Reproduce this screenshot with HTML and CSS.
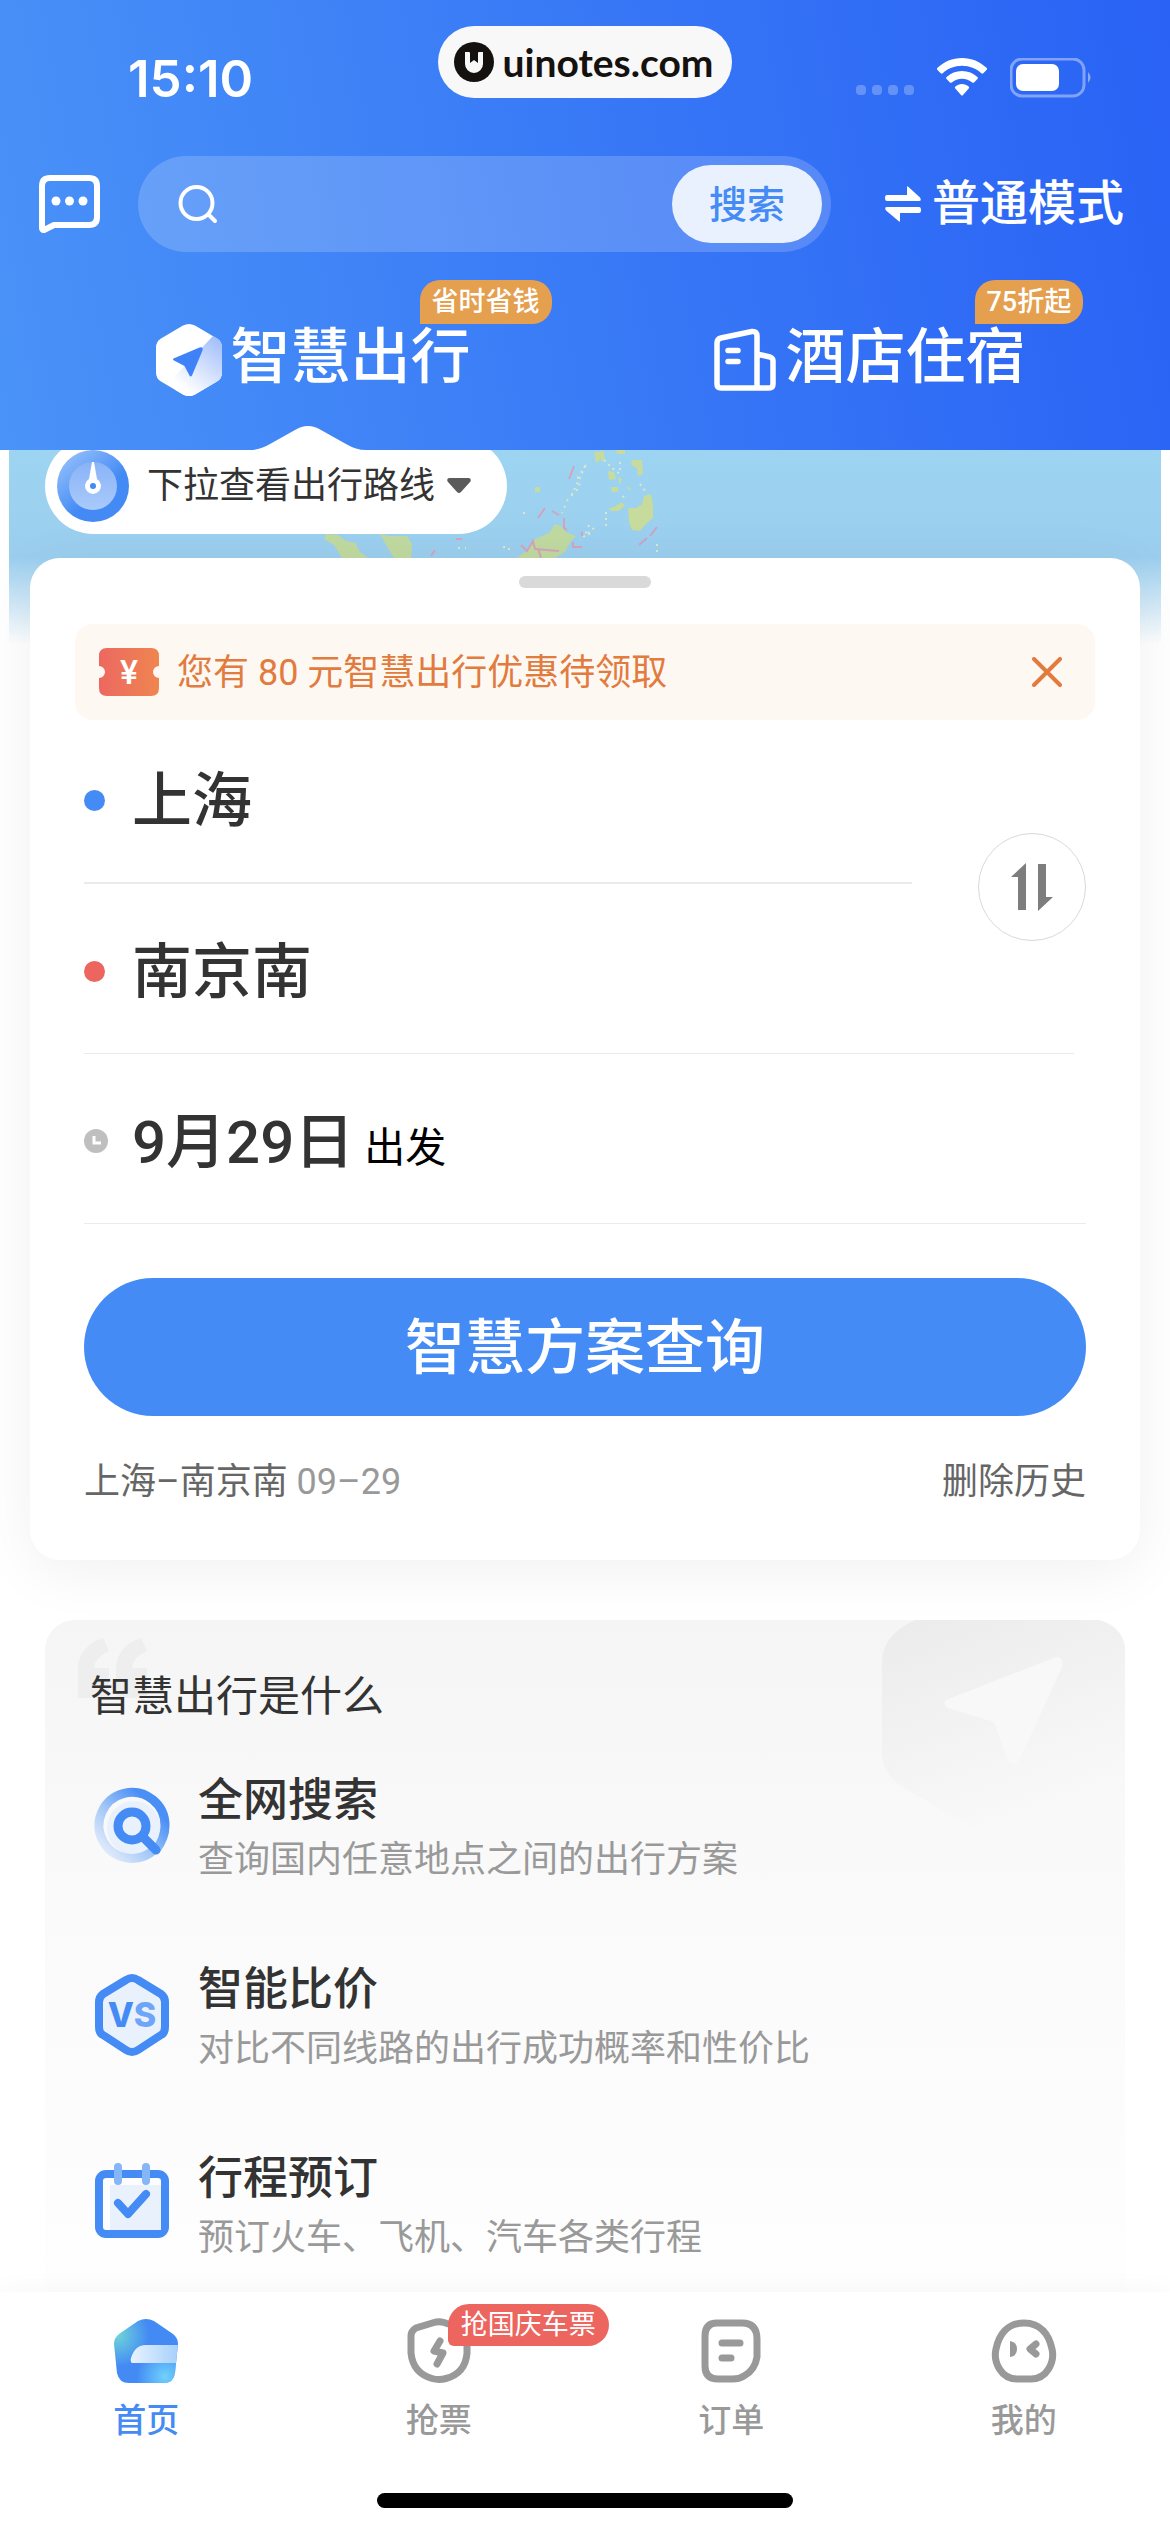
FILE: index.html
```html
<!DOCTYPE html>
<html lang="zh-CN">
<head>
  <meta charset="UTF-8">
  <meta name="viewport" content="width=device-width, initial-scale=1">
  <title>智慧出行</title>
  <link rel="stylesheet" href="styles.css">
</head>
<body>
  <header class="header">
    <div class="status-bar">
      <span class="time">15:10</span>
      <div class="site-pill">
        <svg width="40" height="40" viewBox="0 0 40 40" aria-hidden="true">
          <circle cx="20" cy="20" r="20" fill="#15110f"/>
          <path d="M11 10h4q1 0 1 1v10l4-3 4 3V11q0-1 1-1h4v12a9 9 0 0 1-18 0z" fill="#f8f8f8"/>
          <path d="M16.500 8h7v11l-3.500-3-3.500 3z" fill="#15110f"/>
        </svg>
        <span>uinotes.com</span>
      </div>
      <div class="status-icons">
        <svg width="58" height="38" viewBox="0 0 58 38" fill="#fff" opacity=".25" aria-hidden="true">
          <rect y="27" width="10" height="10" rx="4"/><rect x="16" y="27" width="10" height="10" rx="4"/>
          <rect x="32" y="27" width="10" height="10" rx="4"/><rect x="48" y="27" width="10" height="10" rx="4"/>
        </svg>
        <svg width="52" height="38" viewBox="0 0 52 38" fill="#fff" aria-hidden="true">
          <path d="M26 0c9.500 0 18 3.700 24.500 9.800.7.700.7 1.500 0 2.200l-3.200 3.200c-.6.600-1.400.6-2 0C40.200 10.500 33.500 7.700 26 7.700S11.800 10.500 6.700 15.200c-.6.600-1.400.6-2 0L1.500 12c-.7-.7-.7-1.500 0-2.200C8 3.700 16.500 0 26 0z"/>
          <path d="M26 13c6 0 11.300 2.300 15.400 6 .7.600.7 1.500 0 2.100l-3.300 3.300c-.6.600-1.300.6-1.900.1-2.800-2.400-6.300-3.800-10.200-3.800s-7.400 1.400-10.200 3.800c-.6.500-1.300.5-1.900-.1l-3.300-3.300c-.7-.6-.7-1.500 0-2.100C14.700 15.300 20 13 26 13z"/>
          <path d="M26 26c2.500 0 4.800.9 6.600 2.400.7.600.7 1.400.1 2L27 36.900c-.6.700-1.400.7-2 0l-5.700-6.500c-.6-.6-.6-1.400.1-2C21.200 26.900 23.500 26 26 26z"/>
        </svg>
        <svg width="82" height="40" viewBox="0 0 82 40" aria-hidden="true">
          <rect x="1" y="1" width="73" height="37" rx="11" fill="none" stroke="#fff" stroke-opacity=".4" stroke-width="3"/>
          <rect x="6" y="6" width="43" height="27" rx="7" fill="#fff"/>
          <path d="M78 14q5 5.500 0 11z" fill="#fff" fill-opacity=".45"/>
        </svg>
      </div>
    </div>

    <div class="search-row">
      <button class="icon-button" type="button" aria-label="消息">
        <svg width="61" height="60" viewBox="0 0 61 60" aria-hidden="true">
          <path d="M11 4h39q8 0 8 8v31q0 8-8 8H15L5 56q-2 .5-2-2V12q0-8 8-8z" fill="none" stroke="#fff" stroke-width="6" stroke-linejoin="round"/>
          <circle cx="17" cy="27" r="4.500" fill="#fff"/><circle cx="30.500" cy="27" r="4.500" fill="#fff"/><circle cx="44" cy="27" r="4.500" fill="#fff"/>
        </svg>
      </button>
      <form class="search-box">
        <svg width="40" height="40" viewBox="0 0 40 40" fill="none" stroke="#fff" stroke-width="4" stroke-linecap="round" aria-hidden="true">
          <circle cx="18.500" cy="19" r="16"/><path d="M31 31l6 6"/>
        </svg>
        <input class="search-input" type="text" aria-label="搜索内容">
        <button class="search-button" type="button">搜索</button>
      </form>
      <button class="mode-button" type="button">
        <svg width="36" height="36" viewBox="0 0 36 36" fill="#fff" aria-hidden="true">
          <path d="M2 9h20V1.500q0-2 1.500-.5L35 11.500q2 3.500-1 3.500H2q-2 0-2-3t2-3z"/>
          <path d="M34 21q2 0 2 3t-2 3H15v7.500q0 2-1.500.5L1 24.500Q-1 21 2 21z"/>
        </svg>
        <span>普通模式</span>
      </button>
    </div>

    <nav class="tabs">
      <a class="tab" href="#travel">
        <svg width="68" height="72" viewBox="0 0 68 72" aria-hidden="true">
          <defs>
            <linearGradient id="hexShade" x1="1" y1="0" x2=".4" y2="1">
              <stop offset="0" stop-color="#9ab9fb"/><stop offset="1" stop-color="#fff"/>
            </linearGradient>
            <clipPath id="hexClip"><path d="M28 1.500q6-3 12 0l22 13q5 3 5 9v25q0 6-5 9l-22 13q-6 3-12 0l-22-13q-5-3-5-9v-25q0-6 5-9z"/></clipPath>
          </defs>
          <g clip-path="url(#hexClip)">
            <rect width="68" height="72" fill="#fff"/>
            <path d="M58 12L20 52v20h48V12z" fill="url(#hexShade)"/>
          </g>
          <path d="M18.500 34.500l26-11q4-1 3 3l-10.500 25q-1.500 2-2.500 0l-5-9.500-10.500-5.500q-2-1-.5-2z" fill="#3f82f7"/>
        </svg>
        <span class="tab-label">智慧出行<span class="tab-badge">省时省钱</span></span>
      </a>
      <a class="tab" href="#hotel">
        <svg width="64" height="64" viewBox="0 0 64 64" fill="none" stroke="#fff" stroke-width="5.500" stroke-linecap="round" stroke-linejoin="round" aria-hidden="true">
          <path d="M43 60V8q0-5-5-4.500L7 10q-4 1-4 5v41q0 4 4 4h48q4 0 4-4V33q0-3-3-4l-13-3"/>
          <path d="M14 22.500h10M14 33.500h10"/>
        </svg>
        <span class="tab-label">酒店住宿<span class="tab-badge">75折起</span></span>
      </a>
      <svg class="tab-notch" width="116" height="24" viewBox="0 0 116 24" aria-hidden="true">
        <path d="M0 24q10 0 20-6L45 4q13-8 26 0l25 14q10 6 20 6z" fill="#fff"/>
      </svg>
    </nav>
  </header>

  <main class="main" id="travel">
    <section class="map">
      <svg class="map-land" width="600" height="108" viewBox="0 0 600 108" aria-hidden="true">
        <g fill="#bfd9a0">
          <path d="M317 84l12 1 8 6 10 2 3 8 9 7h-26l-8-13-10-6z"/>
          <path d="M371 84l9 2 18 0 5 8-1 14h-17l-5-8z"/>
          <path d="M508 108l12-9 6-10 14-6 6-9 6 2 5 6 10 4-6 6-5 10-10 6z"/>
        </g>
        <path d="M590 2l4-2 2 8-3 5zM526 37h5v5h-5z" fill="#c6db9c"/>
        <path d="M565 16l-5 13M536 58l-7 10M543 61l7 4M555 68v10l3 2M512 95l6 6 6-10 2 8 24 2M529 98l3 10M447 89h6M426 100l-4 6M573 82v4M564 92v5h9" fill="none" stroke="#d4a3bb" stroke-width="2"/>
        <path d="M577 15l-8 12 2 10-12 12-6 14M580 75l-4 10 8-2M449 98h8M494 97h6v5M514 63h6" fill="none" stroke="#dce8c4" stroke-width="2" stroke-dasharray="2 5"/>
      </svg>
      <!-- Philippines -->
      <svg class="map-islands" width="90" height="108" viewBox="0 0 90 108" aria-hidden="true">
        <g fill="#c6db9c">
          <path d="M24 2l6 0 1 7-5 4zM46 0h9v4h-8zM62 10l10 0 1 14-5 2-1-8-6-3zM38 21l6 1 2 7-7 1zM41 37h7v5h-6zM48 27l4 2-2 6zM57 37l4 1-2 3z"/>
          <path d="M83 54l-2-10-7 2-2 8-6 4-8 0 1 14 3 8 8 1 7-8 6-5zM38 59l8-3 5-4 4 3-6 6-7 0z"/>
        </g>
        <path d="M15 16l-6 14-8 16M34 10l8 8 8 6M50 12v10M54 46l-4 4M70 34l6 8M36 62v14M24 78l-14 12M87 94v10" fill="none" stroke="#dbe8c8" stroke-width="2" stroke-dasharray="2 4"/>
        <path d="M87 77l-7 9M77 88l-8 7" fill="none" stroke="#cfa2c2" stroke-width="2"/>
      </svg>
      <button class="map-pill" type="button">
        <svg width="72" height="72" viewBox="0 0 72 72" aria-hidden="true">
          <defs>
            <linearGradient id="ring" x1=".1" y1="0" x2=".6" y2=".6">
              <stop offset="0" stop-color="#9ac3fb"/><stop offset="1" stop-color="#438af5"/>
            </linearGradient>
            <linearGradient id="dial" x1="0" y1="0" x2="0" y2="1">
              <stop offset="0" stop-color="#8ab3f8"/><stop offset="1" stop-color="#a9cafa"/>
            </linearGradient>
          </defs>
          <circle cx="36" cy="36" r="36" fill="url(#ring)"/>
          <circle cx="36" cy="36" r="24" fill="url(#dial)"/>
          <path d="M35 12h2l3 17a8 8 0 1 1-8 0z" fill="#fff"/>
          <circle cx="36" cy="36" r="3" fill="#438af5"/>
        </svg>
        下拉查看出行路线
        <svg width="24" height="16" viewBox="0 0 24 16" aria-hidden="true"><path d="M2 0h20q3 1 1 4L14 14q-2 2-4 0L1 4q-2-3 1-4z" fill="#5b5b5b"/></svg>
      </button>
    </section>

    <section class="booking">
      <div class="handle"></div>
      <div class="coupon">
        <svg width="60" height="48" viewBox="0 0 60 48" aria-hidden="true">
          <defs><linearGradient id="ticket"><stop offset="0" stop-color="#ec6860"/><stop offset="1" stop-color="#ef8550"/></linearGradient></defs>
          <path d="M8 0h44q8 0 8 8v10a6 6 0 0 0 0 12v10q0 8-8 8H8q-8 0-8-8V30a6 6 0 0 0 0-12V8q0-8 8-8z" fill="url(#ticket)"/>
          <text x="30" y="36" class="ticket-sign" text-anchor="middle">¥</text>
        </svg>
        <span class="coupon-text">您有 80 元智慧出行优惠待领取</span>
        <button class="icon-button" type="button" aria-label="关闭">
          <svg width="30" height="30" viewBox="0 0 30 30" stroke="#e17b3e" stroke-width="4" stroke-linecap="round" aria-hidden="true"><path d="M2 2l26 26M28 2L2 28"/></svg>
        </button>
      </div>

      <div class="route">
        <button class="route-row from" type="button"><span class="dot blue"></span>上海</button>
        <button class="route-row to" type="button"><span class="dot red"></span>南京南</button>
        <button class="swap" type="button" aria-label="交换出发地和目的地">
          <svg width="42" height="48" viewBox="0 0 42 48" fill="#7d7d7d" aria-hidden="true"><path d="M15 0v47H7V14H0zM27 48V1h8v33h7z"/></svg>
        </button>
        <button class="route-row date" type="button">
          <svg width="24" height="24" viewBox="0 0 24 24" aria-hidden="true"><circle cx="12" cy="12" r="12" fill="#bfbfbf"/><path d="M10 7v7h7" fill="none" stroke="#fff" stroke-width="3"/></svg>
          9月29日<small>出发</small>
        </button>
      </div>

      <button class="query-button" type="button">智慧方案查询</button>

      <div class="history">
        <a href="#history">上海–南京南 <span>09–29</span></a>
        <button class="clear-button" type="button">删除历史</button>
      </div>
    </section>

    <section class="info">
      <svg class="quote" width="70" height="60" viewBox="0 0 70 60" fill="#eee" aria-hidden="true">
        <path id="quoteMark" d="M25 0l6 13q-14 6-15 17h15v30H0V30Q1 8 25 0z"/>
        <use href="#quoteMark" x="38"/>
      </svg>
      <svg class="info-mark" width="243" height="216" viewBox="0 0 243 216" aria-hidden="true">
        <defs><linearGradient id="mark" x1=".2" y1="0" x2=".6" y2="1"><stop offset="0" stop-color="#ececec"/><stop offset="1" stop-color="#fafafa"/></linearGradient></defs>
        <path d="M33 0q-33 15-33 42v92q0 20 22 34l66 38q36 20 72 0l83-46V20Q236 8 218 0z" fill="url(#mark)"/>
        <path d="M64 80L174 37q8 0 6 10l-43 94q-6 6-11 0L112 102 66 88q-6-4-2-8z" fill="#f8f8f8"/>
      </svg>
      <h2 class="info-title">智慧出行是什么</h2>
      <ul class="features">
        <li class="feature">
          <svg width="84" height="84" viewBox="0 0 84 84" fill="none" aria-hidden="true">
            <defs><linearGradient id="loop" x1=".9" y1=".3" x2=".2" y2="1"><stop offset="0" stop-color="#4a8ff6"/><stop offset=".55" stop-color="#a4c8f8"/><stop offset="1" stop-color="#dfeafa"/></linearGradient></defs>
            <circle cx="44" cy="44" r="27" fill="#e9f1fd"/>
            <path d="M65 65A33 33 0 1 1 75 42Q75 54 66 66" stroke="url(#loop)" stroke-width="9"/>
            <circle cx="42" cy="42" r="14" stroke="#458bf5" stroke-width="9" fill="#e9f1fd"/>
            <path d="M54 54l12 12" stroke="#458bf5" stroke-width="9" stroke-linecap="round"/>
          </svg>
          <div>
            <h3>全网搜索</h3>
            <p>查询国内任意地点之间的出行方案</p>
          </div>
        </li>
        <li class="feature">
          <svg width="84" height="84" viewBox="0 0 84 84" aria-hidden="true">
            <path d="M36 7q6-4 12 0l23 14q4 3 4 8v25q0 6-4 8L48 77q-6 4-12 0L13 62q-4-2-4-8V29q0-5 4-8z" fill="#e9f1fd" stroke="#458bf5" stroke-width="8" stroke-linejoin="round"/>
            <text x="42" y="54" class="vs-text" text-anchor="middle">V<tspan class="second">S</tspan></text>
          </svg>
          <div>
            <h3>智能比价</h3>
            <p>对比不同线路的出行成功概率和性价比</p>
          </div>
        </li>
        <li class="feature">
          <svg width="84" height="84" viewBox="0 0 84 84" fill="none" stroke-linecap="round" stroke-linejoin="round" aria-hidden="true">
            <rect x="9" y="12" width="66" height="60" rx="7" stroke="#458bf5" stroke-width="8"/>
            <path d="M20 23h51v45H20z" fill="#e9f1fd"/>
            <path d="M28 5v14M56 5v14" stroke="#84b6f8" stroke-width="8"/>
            <path d="M28 41l10 11 18-20" stroke="#458bf5" stroke-width="8"/>
          </svg>
          <div>
            <h3>行程预订</h3>
            <p>预订火车、飞机、汽车各类行程</p>
          </div>
        </li>
      </ul>
    </section>
  </main>

  <footer class="bottom">
    <nav class="bottom-nav">
      <a class="nav-item active" href="#home">
        <span class="nav-icon">
          <svg width="72" height="72" viewBox="0 0 72 72" aria-hidden="true">
            <defs>
              <radialGradient id="homeTeal" cx=".05" cy=".25" r=".5"><stop offset="0" stop-color="#6fd5d8"/><stop offset="1" stop-color="#438af5"/></radialGradient>
              <radialGradient id="homeSky" cx=".8" cy=".9" r=".45"><stop offset="0" stop-color="#70d2fb"/><stop offset="1" stop-color="#70d2fb" stop-opacity="0"/></radialGradient>
              <linearGradient id="homeDoor"><stop offset="0" stop-color="#e9f2fe"/><stop offset="1" stop-color="#a6d0fb"/></linearGradient>
              <path id="house" d="M28 5q8-4 16 0l19 13q5 4 5 10l-3 29q-1 10-12 10H19Q9 67 7 57L4 28q0-6 5-10z"/>
            </defs>
            <use href="#house" fill="url(#homeTeal)"/>
            <use href="#house" fill="url(#homeSky)"/>
            <path d="M36 29h32l-2 18H22q-2-1-1-5 4-13 15-13z" fill="url(#homeDoor)"/>
          </svg>
        </span>
        首页
      </a>
      <a class="nav-item" href="#tickets">
        <span class="nav-icon">
          <svg width="72" height="72" viewBox="0 0 72 72" fill="none" stroke="#999" aria-hidden="true">
            <path d="M31 6.500q5-1.500 10 0l18 6q5 2 5 8v17q-2 20-21 25-7 2-14 0Q10 57 8 37V20q0-5 5-8z" stroke-width="7"/>
            <path d="M37 25l-6 10 9 2-6 11" stroke-width="7" stroke-linecap="round" stroke-linejoin="round"/>
          </svg>
          <span class="nav-badge">抢国庆车票</span>
        </span>
        抢票
      </a>
      <a class="nav-item" href="#orders">
        <span class="nav-icon">
          <svg width="72" height="72" viewBox="0 0 72 72" fill="none" stroke="#999" stroke-width="7" stroke-linecap="round" aria-hidden="true">
            <path d="M22 7h25q15 0 15 16v18q-2 13-13 19-5 3-11 3H23Q10 63 10 50V20Q10 7 22 7z"/>
            <path d="M27 27h18M27 42h9"/>
          </svg>
        </span>
        订单
      </a>
      <a class="nav-item" href="#mine">
        <span class="nav-icon">
          <svg width="72" height="72" viewBox="0 0 72 72" fill="none" stroke="#999" stroke-width="7" stroke-linecap="round" stroke-linejoin="round" aria-hidden="true">
            <path d="M36 7c17 0 25 12 28 26 3 13-5 30-21 30H29C13 63 5 46 8 33 11 19 19 7 36 7z"/>
            <path d="M22 25q7 1 7 8t-7 8z" fill="#999" stroke="none"/>
            <path d="M48 28l-6 5 6 5"/>
          </svg>
        </span>
        我的
      </a>
    </nav>
    <div class="home-indicator"></div>
  </footer>
</body>
</html>
```

FILE: styles.css
```css
* {
  box-sizing: border-box;
}

body {
  margin: 0;
  min-height: 100vh;
  display: flex;
  flex-direction: column;
  background: #fff;
  color: #333;
  font-family: Roboto, "Noto Sans CJK SC", sans-serif;
  font-size: 36px;
}

button {
  border: 0;
  padding: 0;
  background: none;
  color: inherit;
  font: inherit;
  cursor: pointer;
}

a {
  color: inherit;
  text-decoration: none;
}

svg {
  display: block;
  flex: none;
}

/* header */
.header {
  position: relative;
  z-index: 1;
  background: linear-gradient(80deg, #4a93f8, #3777f6 55%, #2962f5);
  color: #fff;
}

.status-bar {
  display: grid;
  grid-template-columns: 1fr auto 1fr;
  align-items: center;
  height: 156px;
}

.time {
  padding-left: 128px;
  font-family: Inter, sans-serif;
  font-size: 51px;
  font-weight: 600;
}

.site-pill {
  align-self: start;
  display: flex;
  align-items: center;
  gap: 8px;
  height: 72px;
  margin-top: 26px;
  padding: 0 18px 0 16px;
  border-radius: 36px;
  background: #f8f8f8;
  color: #15110f;
  font-family: Lato, sans-serif;
  font-size: 39px;
  font-weight: 700;
}

.status-icons {
  display: flex;
  justify-content: flex-end;
  gap: 22px;
  padding-right: 78px;
}

.search-row {
  display: flex;
  align-items: center;
  padding: 0 46px 0 39px;
}

.search-box {
  flex: 1;
  min-width: 0;
  display: flex;
  align-items: center;
  height: 96px;
  margin: 0 54px 0 38px;
  padding: 0 9px 0 40px;
  border-radius: 48px;
  background: rgba(255, 255, 255, 0.18);
}

.search-input {
  flex: 1;
  min-width: 0;
  height: 78px;
  padding: 0 20px;
  border: 0;
  outline: 0;
  background: none;
  color: #fff;
  font: inherit;
}

.search-button {
  flex: none;
  width: 150px;
  height: 78px;
  border-radius: 39px;
  background: #e9f1fe;
  color: #458bf5;
  font-size: 38px;
  font-weight: 500;
  line-height: 80px;
}

.mode-button {
  display: flex;
  align-items: center;
  gap: 11px;
  font-size: 48px;
  font-weight: 500;
  line-height: 60px;
  white-space: nowrap;
}

.tabs {
  position: relative;
  display: grid;
  grid-template-columns: 1fr 1fr;
  height: 198px;
  padding: 72px 22px 0 34px;
}

.tab {
  display: flex;
  justify-content: center;
  align-items: center;
  align-self: start;
  gap: 8px;
  height: 72px;
}

.tab-label {
  position: relative;
  margin-bottom: 4px;
  font-size: 60px;
  font-weight: 500;
  line-height: 68px;
}

.tab-badge {
  position: absolute;
  left: 189px;
  bottom: 100%;
  height: 44px;
  padding: 0 12px;
  border-radius: 20px 20px 20px 0;
  background: #e4a04f;
  font-size: 27px;
  line-height: 44px;
  white-space: nowrap;
}

.tab-notch {
  position: absolute;
  left: 250px;
  bottom: 0;
}

.main {
  flex: 1;
  display: flex;
  flex-direction: column;
}

/* map strip behind the booking card */
.map {
  position: relative;
  display: flex;
  align-items: flex-start;
  height: 195px;
  margin: 0 9px;
  background: linear-gradient(#9dd4f2, #9bceee 55%, rgba(155, 206, 238, 0));
}

.map-land {
  position: absolute;
  left: 0;
  top: 0;
}

.map-islands {
  position: absolute;
  left: 561px;
  top: 0;
}

/* tucked under the header edge */
.map-pill {
  position: relative;
  display: flex;
  align-items: center;
  height: 96px;
  margin: -12px 0 0 36px;
  padding: 0 36px 0 12px;
  border-radius: 48px;
  background: #fff;
  line-height: 48px;
}

.map-pill svg:first-child {
  margin-right: 18px;
}

.map-pill svg:last-child {
  margin-left: 12px;
}

/* booking card */
.booking {
  position: relative;
  margin: -87px 30px 0;
  padding: 18px 54px 54px;
  border-radius: 30px;
  background: #fff;
  box-shadow: 0 12px 60px rgba(0, 0, 0, 0.06);
}

.handle {
  width: 132px;
  height: 12px;
  margin: 0 auto 36px;
  border-radius: 6px;
  background: #d9d9d9;
}

.coupon {
  display: flex;
  align-items: center;
  height: 96px;
  margin: 0 -9px;
  padding: 0 33px 0 24px;
  border-radius: 18px;
  background: #fef8f2;
  color: #e17b3e;
}

.coupon-text {
  flex: 1;
  padding: 2px 0 0 18px;
  line-height: 48px;
}

.ticket-sign {
  fill: #fff;
  font-size: 34px;
  font-weight: 500;
}

.route {
  display: grid;
  grid-template-columns: 1fr 108px;
  gap: 7px 66px;
}

.route-row {
  display: flex;
  align-items: center;
  grid-column: 1 / -1;
  padding: 50px 0 48px;
  border-bottom: 1px solid #ebebeb;
  font-size: 60px;
  font-weight: 500;
  line-height: 64px;
}

.route-row.from {
  grid-column: 1;
  grid-row: 1;
  border-bottom-width: 2px;
}

.route-row.to {
  grid-row: 2;
  margin-right: 12px;
}

.route-row small {
  margin-left: 10px;
  padding-top: 10px;
  color: #000;
  font-size: 41px;
  font-weight: 400;
  line-height: 54px;
}

.route-row svg,
.dot {
  margin-bottom: 4px;
}

.route-row svg {
  margin-right: 24px;
}

.dot {
  width: 21px;
  height: 21px;
  margin-right: 27px;
  border-radius: 50%;
}

.dot.blue {
  background: #458bf5;
}

.dot.red {
  background: #ec655f;
}

.swap {
  grid-column: 2;
  grid-row: 1 / 3;
  align-self: center;
  display: flex;
  align-items: center;
  justify-content: center;
  height: 108px;
  border: 1px solid #d9d9d9;
  border-radius: 50%;
  background: #fff;
}

.query-button {
  width: 100%;
  height: 138px;
  margin-top: 54px;
  padding-top: 4px;
  border-radius: 69px;
  background: #448bf5;
  color: #fff;
  font-size: 60px;
  font-weight: 500;
  line-height: 64px;
}

.history {
  display: flex;
  justify-content: space-between;
  margin-top: 42px;
  color: #666;
  line-height: 48px;
}

.history span {
  color: #999;
}

/* feature list */
.info {
  position: relative;
  flex: 1;
  margin: 60px 45px 0;
  padding: 53px 45px 0;
  border-radius: 30px 30px 0 0;
  background: linear-gradient(#f5f5f5, #f9f9f9 30%, #fefefe);
  overflow: hidden;
}

.quote {
  position: absolute;
  left: 33px;
  top: 18px;
}

.info-mark {
  position: absolute;
  right: 0;
  top: 0;
}

.info-title {
  position: relative;
  margin: 0 0 50px;
  font-size: 42px;
  font-weight: 400;
  line-height: 48px;
}

.features {
  display: grid;
  gap: 71px;
  margin: 0;
  padding: 0;
  list-style: none;
}

.feature {
  position: relative;
  display: flex;
  align-items: center;
  gap: 24px;
}

.feature svg {
  margin-bottom: 8px;
}

.feature h3 {
  margin: 0;
  font-size: 45px;
  font-weight: 500;
  line-height: 60px;
}

.feature p {
  margin: 0;
  color: #999;
  line-height: 58px;
}

.vs-text {
  fill: #458bf5;
  font-family: Inter, sans-serif;
  font-size: 34px;
  font-weight: 800;
}

.vs-text .second {
  fill: #6ea5f8;
}

/* bottom navigation */
.bottom {
  position: relative;
  padding-bottom: 24px;
  background: #fff;
  box-shadow: 0 -4px 24px rgba(0, 0, 0, 0.03);
}

.bottom-nav {
  display: grid;
  grid-template-columns: repeat(4, 1fr);
  padding: 24px 0 52px;
}

.nav-item {
  display: flex;
  flex-direction: column;
  align-items: center;
  gap: 13px;
  color: #999;
  font-size: 33px;
  font-weight: 500;
  line-height: 40px;
}

.nav-item.active {
  color: #458bf5;
}

.nav-icon {
  position: relative;
}

.nav-badge {
  position: absolute;
  left: 45px;
  top: -12px;
  height: 42px;
  padding: 0 13px;
  border-radius: 21px 21px 21px 6px;
  background: #ec655f;
  color: #fff;
  font-size: 27px;
  font-weight: 400;
  line-height: 42px;
  white-space: nowrap;
}

.home-indicator {
  width: 416px;
  height: 15px;
  margin: 0 auto;
  border-radius: 8px;
  background: #000;
}
```
